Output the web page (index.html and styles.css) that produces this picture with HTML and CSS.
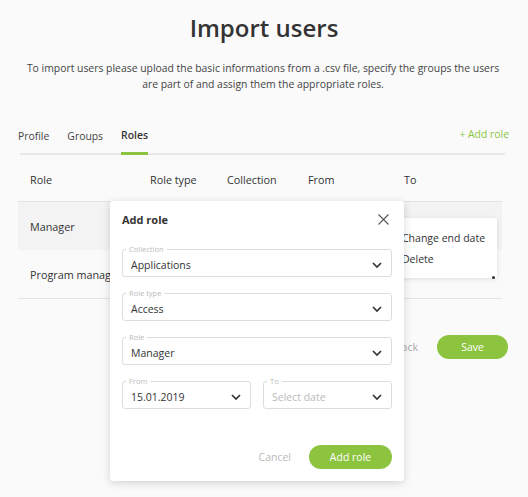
FILE: index.html
```html
<!doctype html>
<html lang="en">
<head>
    <meta charset="UTF-8">
    <title>Import users</title>
    <link rel="stylesheet" href="styles.css">
</head>
<body>
<div class="page">
    <h1 class="title">Import users</h1>
    <p class="intro">To import users please upload the basic informations from a .csv file, specify the groups the users are part of and assign them the appropriate roles.</p>

    <div class="tabs">
        <span class="tab">Profile</span>
        <span class="tab">Groups</span>
        <span class="tab active">Roles</span>
        <span class="addLink">+ Add role</span>
    </div>

    <table class="roles">
        <thead>
            <tr>
                <th class="cRole">Role</th>
                <th class="cType">Role type</th>
                <th class="cColl">Collection</th>
                <th class="cFrom">From</th>
                <th>To</th>
            </tr>
        </thead>
        <tbody>
            <tr class="hover">
                <td>Manager</td>
                <td></td>
                <td></td>
                <td></td>
                <td></td>
            </tr>
            <tr>
                <td>Program manager</td>
                <td></td>
                <td></td>
                <td></td>
                <td></td>
            </tr>
        </tbody>
    </table>

    <div class="actions">
        <span class="back">Back</span>
        <button class="btn">Save</button>
    </div>

    <!-- row context menu -->
    <div class="menu">
        <div class="menuItem">Change end date</div>
        <div class="menuItem">Delete</div>
        <span class="menuDot"></span>
    </div>

    <!-- add role dialog -->
    <div class="modal">
        <div class="modalHead">
            <span class="modalTitle">Add role</span>
            <svg class="close" width="11" height="11" viewBox="0 0 11 11">
                <path d="M0.5 0.5 L10.5 10.5 M10.5 0.5 L0.5 10.5" stroke="#555" stroke-width="1.1" fill="none"/>
            </svg>
        </div>

        <fieldset class="field">
            <legend>Collection</legend>
            <div class="value">Applications<svg class="chev" width="10" height="6" viewBox="0 0 10 6"><path d="M1 1 L5 5 L9 1" stroke="#333" stroke-width="1.7" fill="none"/></svg></div>
        </fieldset>
        <fieldset class="field">
            <legend>Role type</legend>
            <div class="value">Access<svg class="chev" width="10" height="6" viewBox="0 0 10 6"><path d="M1 1 L5 5 L9 1" stroke="#333" stroke-width="1.7" fill="none"/></svg></div>
        </fieldset>
        <fieldset class="field">
            <legend>Role</legend>
            <div class="value">Manager<svg class="chev" width="10" height="6" viewBox="0 0 10 6"><path d="M1 1 L5 5 L9 1" stroke="#333" stroke-width="1.7" fill="none"/></svg></div>
        </fieldset>
        <div class="dates">
            <fieldset class="field">
                <legend>From</legend>
                <div class="value">15.01.2019<svg class="chev" width="10" height="6" viewBox="0 0 10 6"><path d="M1 1 L5 5 L9 1" stroke="#333" stroke-width="1.7" fill="none"/></svg></div>
            </fieldset>
            <fieldset class="field">
                <legend>To</legend>
                <div class="value empty">Select date<svg class="chev" width="10" height="6" viewBox="0 0 10 6"><path d="M1 1 L5 5 L9 1" stroke="#333" stroke-width="1.7" fill="none"/></svg></div>
            </fieldset>
        </div>

        <div class="modalFoot">
            <span class="cancel">Cancel</span>
            <button class="btn btnWide">Add role</button>
        </div>
    </div>
</div>
</body>
</html>
```

FILE: styles.css
```css
body{
    margin: 0;
    background-color: #fafafa;
    font-family: "Open Sans", "Liberation Sans", sans-serif;
    color: #333;
}
.page{
    position: relative;
    width: 528px;
    height: 497px;
    padding: 0 18px;
    box-sizing: border-box;
    overflow: hidden;
}
.title{
    margin: 0;
    padding-top: 11px;
    font-size: 24px;
    line-height: 34px;
    font-weight: 600;
    text-align: center;
    color: #333;
}
.intro{
    margin: 15px 8px 0 6px;
    font-size: 10.4px;
    line-height: 16px;
    text-align: center;
    color: #444;
}
.tabs{
    display: flex;
    align-items: flex-end;
    margin: 34px 5px 0 2px;
    border-bottom: 2px solid #e8e8e8;
    font-size: 10.4px;
    line-height: 16px;
}
.tab{
    margin-left: -2px;
    margin-right: 20px;
    padding-bottom: 9px;
    color: #444;
}
.tab.active{
    font-weight: 600;
    color: #333;
    border-bottom: 3px solid #8cc43f;
    margin-bottom: -2px;
}
.addLink{
    margin-left: auto;
    margin-right: -4px;
    padding-bottom: 11px;
    color: #8cc43f;
}
.roles{
    width: 484px;
    margin-top: 3px;
    border-collapse: collapse;
    font-size: 10.8px;
    color: #333;
}
.roles th{
    height: 43px;
    padding: 0 0 0 12px;
    text-align: left;
    font-weight: 400;
    border-bottom: 1px solid #e4e4e4;
}
.roles td{
    height: 48px;
    padding: 0 0 0 12px;
    white-space: nowrap;
}
.roles tbody tr:last-child td{
    border-bottom: 1px solid #e4e4e4;
}
.roles tr.hover td{
    background-color: #f3f3f3;
}
.cRole{ width: 108px; }
.cType{ width: 65px; }
.cColl{ width: 69px; }
.cFrom{ width: 84px; }

.actions{
    display: flex;
    justify-content: flex-end;
    align-items: center;
    gap: 19px;
    margin-top: 36px;
    margin-right: 2px;
    font-size: 10.5px;
}
.back{
    color: #aaa;
}
.btn{
    height: 24px;
    width: 71px;
    border: none;
    border-radius: 12px;
    background-color: #8cc43f;
    color: #fff;
    font-family: inherit;
    font-size: 10.5px;
}
.btnWide{
    width: 83px;
}

.menu{
    position: absolute;
    left: 388px;
    top: 218px;
    width: 109px;
    height: 60px;
    padding: 10px 0 0 14px;
    box-sizing: border-box;
    background-color: #fff;
    box-shadow: 0 1px 5px rgba(0,0,0,0.12);
    font-size: 10.5px;
    color: #333;
}
.menuItem{
    line-height: 21px;
}
.menuDot{
    position: absolute;
    right: 2px;
    bottom: -1px;
    width: 3px;
    height: 3px;
    border-radius: 50%;
    background-color: #333;
}

.modal{
    position: absolute;
    left: 110px;
    top: 201px;
    width: 294px;
    height: 280px;
    padding: 10px 12px 12px 12px;
    box-sizing: border-box;
    background-color: #fff;
    border-radius: 3px;
    box-shadow: 0 2px 8px rgba(0,0,0,0.16);
    display: flex;
    flex-direction: column;
}
.modalHead{
    display: flex;
    justify-content: space-between;
    align-items: center;
    height: 16px;
    margin-bottom: 17px;
}
.modalTitle{
    font-size: 11px;
    font-weight: 700;
    color: #333;
}
.close{
    margin-right: 3px;
}
.field{
    margin: 0 0 11px 0;
    padding: 0 8px;
    border: 1px solid #ddd;
    border-radius: 3px;
    min-width: 0;
}
.field legend{
    margin-left: -5px;
    padding: 0 3px;
    font-size: 7.5px;
    line-height: 10px;
    color: #bbb;
}
.value{
    display: flex;
    justify-content: space-between;
    align-items: center;
    height: 22px;
    font-size: 10.5px;
    color: #333;
}
.value.empty{
    color: #bbb;
}
.chev{
    margin-right: 1px;
}
.dates{
    display: flex;
    gap: 12px;
}
.dates .field{
    flex: 1;
}
.modalFoot{
    display: flex;
    justify-content: flex-end;
    align-items: center;
    gap: 18px;
    margin-top: auto;
    font-size: 10.5px;
}
.cancel{
    color: #bbb;
}
```
